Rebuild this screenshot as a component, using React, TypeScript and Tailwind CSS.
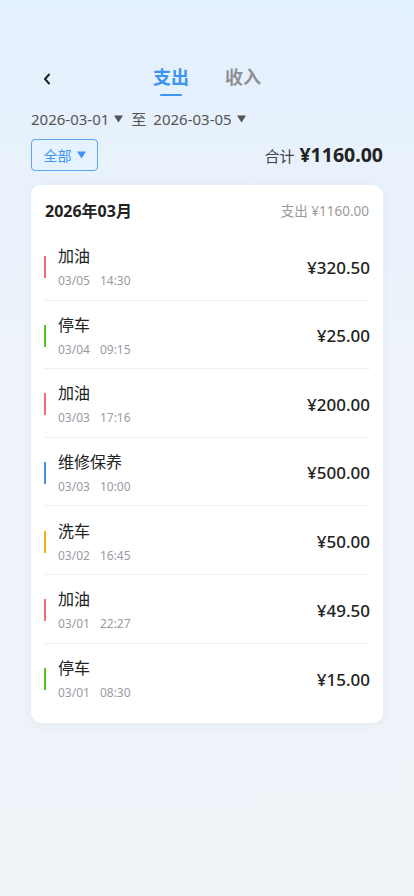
import React from "react";

type Record = {
  title: string;
  date: string;
  time: string;
  amount: string;
  color: string;
};

const records: Record[] = [
  { title: "加油", date: "03/05", time: "14:30", amount: "¥320.50", color: "bg-[#f56c6c]" },
  { title: "停车", date: "03/04", time: "09:15", amount: "¥25.00", color: "bg-[#52c41a]" },
  { title: "加油", date: "03/03", time: "17:16", amount: "¥200.00", color: "bg-[#f56c6c]" },
  { title: "维修保养", date: "03/03", time: "10:00", amount: "¥500.00", color: "bg-[#4a90e2]" },
  { title: "洗车", date: "03/02", time: "16:45", amount: "¥50.00", color: "bg-[#faad14]" },
  { title: "加油", date: "03/01", time: "22:27", amount: "¥49.50", color: "bg-[#f56c6c]" },
  { title: "停车", date: "03/01", time: "08:30", amount: "¥15.00", color: "bg-[#52c41a]" },
];

// small down triangle used next to pickers
const Caret = ({ color }: { color: string }) => (
  <svg width="9" height="8" viewBox="0 0 9 8">
    <path d="M0 0.5 H9 L4.5 7.5 Z" fill={color} />
  </svg>
);

const App: React.FC = () => {
  return (
    <div
      className="min-h-[896px] w-full bg-gradient-to-b from-[#e3f0fe] via-[#eef3fa] via-40% to-[#f0f3f8] px-[31px] pt-[62px] pb-10 text-[#222]"
      style={{ fontFamily: '"Noto Sans", "Noto Sans CJK SC", sans-serif' }}
    >
      {/* header tabs */}
      <div className="relative flex h-[36px] items-center">
        <button className="absolute left-[12px] top-[11px] leading-none">
          <svg width="8" height="12" viewBox="0 0 8 12" fill="none">
            <path d="M6 1.5 L2 6 L6 10.5" stroke="#222" strokeWidth="2" strokeLinecap="round" strokeLinejoin="round" />
          </svg>
        </button>
        <div className="ml-[122px] flex gap-[36px]">
          <div className="flex flex-col items-center">
            <span className="text-[18px] font-bold leading-[26px] text-[#3b95f0]">支出</span>
            <span className="mt-[4px] h-[2px] w-[22px] rounded bg-[#3b95f0]" />
          </div>
          <div className="flex flex-col items-center">
            <span className="text-[18px] font-bold leading-[26px] text-[#8f8f94]">收入</span>
            <span className="mt-[4px] h-[2px] w-[22px]" />
          </div>
        </div>
      </div>

      {/* date range */}
      <div className="mt-[11px] flex items-center text-[15px] leading-[20px] text-[#555]">
        <span>2026-03-01</span>
        <span className="ml-[5px]"><Caret color="#555" /></span>
        <span className="ml-[8px]">至</span>
        <span className="ml-[7px]">2026-03-05</span>
        <span className="ml-[5px]"><Caret color="#555" /></span>
      </div>

      {/* filter + total */}
      <div className="mt-[10px] flex items-center justify-between">
        <button className="flex h-[32px] w-[67px] items-center justify-center gap-[5px] rounded-[4px] border border-[#5aa7f5] bg-[#e6f2ff] text-[14px] text-[#3b95f0]">
          <span>全部</span>
          <Caret color="#3b95f0" />
        </button>
        <div className="flex items-baseline gap-[5px]">
          <span className="text-[15px] text-[#444]">合计</span>
          <span className="text-[19.5px] font-bold text-[#222]">¥1160.00</span>
        </div>
      </div>

      {/* month card */}
      <div className="mt-[14px] rounded-[10px] bg-white px-[13px] pt-[14px] pb-[11px] shadow-[0_2px_10px_rgba(30,60,120,0.06)]">
        <div className="flex items-center justify-between px-px">
          <span className="text-[16px] font-bold leading-[24px] text-[#222]">2026年03月</span>
          <span className="text-[13.5px] leading-[24px] text-[#9a9a9a]">支出 ¥1160.00</span>
        </div>
        <div className="mt-[9px]">
          {records.map((r, i) => (
            <div
              key={i}
              className={`flex h-[68.6px] items-center justify-between pt-[3px] ${
                i < records.length - 1 ? "border-b border-[#f0f0f2]" : ""
              }`}
            >
              <div className="flex items-center">
                <span className={`h-[22px] w-[2px] ${r.color}`} />
                <div className="ml-[12px] flex flex-col">
                  <span className="text-[16px] leading-[22px] text-[#222]">{r.title}</span>
                  <span className="mt-[5px] text-[12px] leading-[17px] text-[#9a9aa2]">
                    {r.date}
                    <span className="ml-[10px]">{r.time}</span>
                  </span>
                </div>
              </div>
              <span className="text-[17px] font-medium text-[#222]">{r.amount}</span>
            </div>
          ))}
        </div>
      </div>
    </div>
  );
};

export default App;
